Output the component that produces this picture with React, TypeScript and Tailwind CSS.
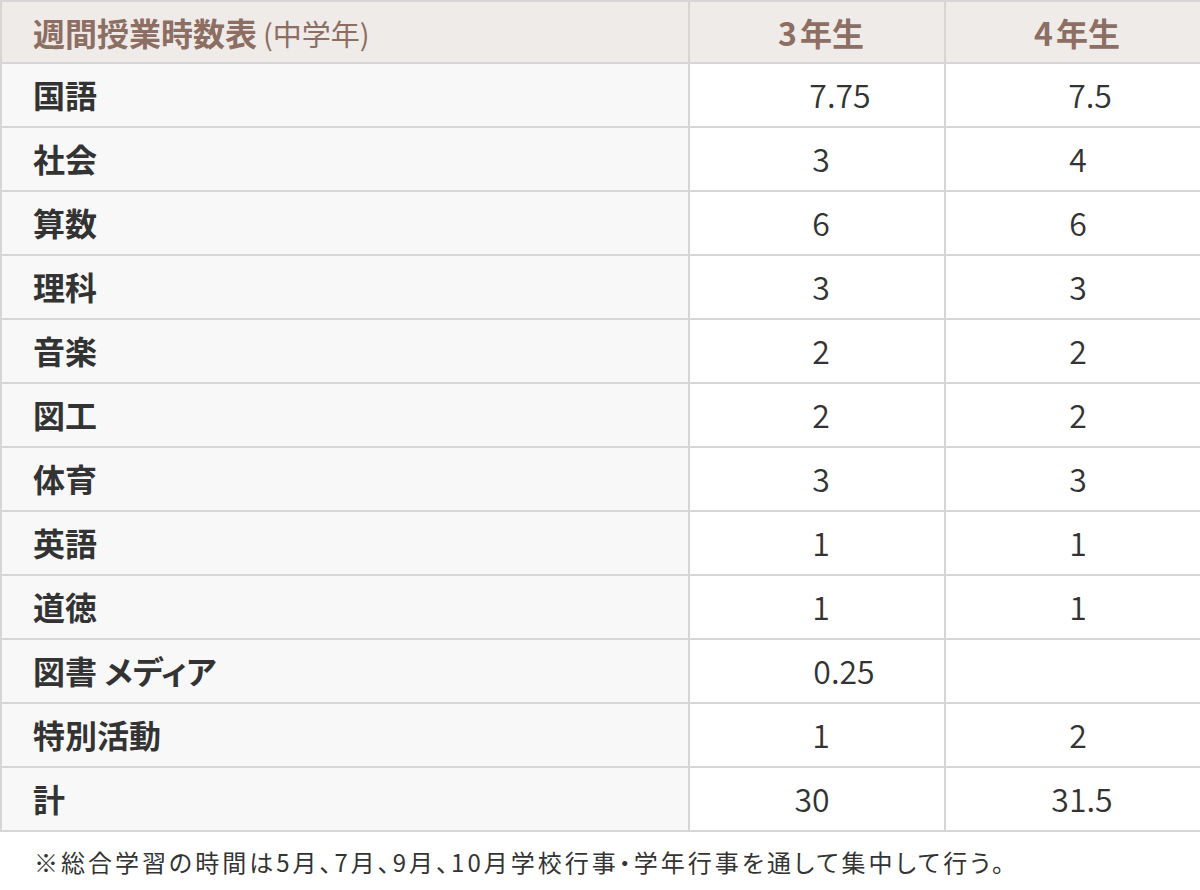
const font = "font-['Noto_Sans_CJK_JP','Noto_Sans',sans-serif]";

type Row = {
  subject: string;
  g3: string;
  g4: string;
  // small nudges so the numbers sit where they do in the printed table
  g3Class?: string;
  g4Class?: string;
};

const rows: Row[] = [
  { subject: '国語', g3: '7.75', g4: '7.5', g3Class: 'pl-[46px]', g4Class: 'pl-[34px]' },
  { subject: '社会', g3: '3', g4: '4' },
  { subject: '算数', g3: '6', g4: '6' },
  { subject: '理科', g3: '3', g4: '3' },
  { subject: '音楽', g3: '2', g4: '2' },
  { subject: '図工', g3: '2', g4: '2' },
  { subject: '体育', g3: '3', g4: '3' },
  { subject: '英語', g3: '1', g4: '1' },
  { subject: '道徳', g3: '1', g4: '1' },
  { subject: '図書 メディア', g3: '0.25', g4: '', g3Class: 'pl-[54px]' },
  { subject: '特別活動', g3: '1', g4: '2' },
  { subject: '計', g3: '30', g4: '31.5', g3Class: 'pr-[10px]', g4Class: 'pl-[18px]' },
];

export default function App() {
  return (
    <div className={`min-h-[890px] w-[1200px] bg-white text-[#333] ${font}`}>
      <table className="w-[1200px] table-fixed border-collapse border-2 border-[#d6d6d6]">
        <colgroup>
          <col className="w-[688px]" />
          <col className="w-[256px]" />
          <col className="w-[256px]" />
        </colgroup>
        <thead>
          <tr className="bg-[#efebe9] text-[#8d6e63]">
            <th className="h-[62px] border-2 border-[#d6d6d6] pl-[31px] text-left text-[32px] font-bold leading-none">
              週間授業時数表
              <span className="ml-[6px] text-[29px] font-normal">(中学年)</span>
            </th>
            <th className="border-2 border-[#d6d6d6] pl-2 text-center text-[32px] font-bold leading-none">
              3<span className="ml-[3px]">年生</span>
            </th>
            <th className="border-2 border-[#d6d6d6] pl-2 text-center text-[32px] font-bold leading-none">
              4<span className="ml-[3px]">年生</span>
            </th>
          </tr>
        </thead>
        <tbody>
          {rows.map((row) => (
            <tr key={row.subject}>
              <td className="h-[64px] border-2 border-[#d6d6d6] bg-[#f8f8f8] pb-[2px] pl-[31px] text-[32px] font-bold leading-none [font-feature-settings:'palt']">
                {row.subject}
              </td>
              <td className={`border-2 border-[#d6d6d6] pb-[2px] text-center text-[32px] [font-weight:350] leading-none ${row.g3Class ?? 'pl-2'}`}>
                {row.g3}
              </td>
              <td className={`border-2 border-[#d6d6d6] pb-[2px] text-center text-[32px] [font-weight:350] leading-none ${row.g4Class ?? 'pl-[10px]'}`}>
                {row.g4}
              </td>
            </tr>
          ))}
        </tbody>
      </table>

      <p className="mt-[12px] pl-[34px] text-[24px] leading-[1.5] tracking-[3px] [font-feature-settings:'palt']">
        ※総合学習の時間は5月、7月、9月、10月学校行事・学年行事を通して集中して行う。
      </p>
    </div>
  );
}
